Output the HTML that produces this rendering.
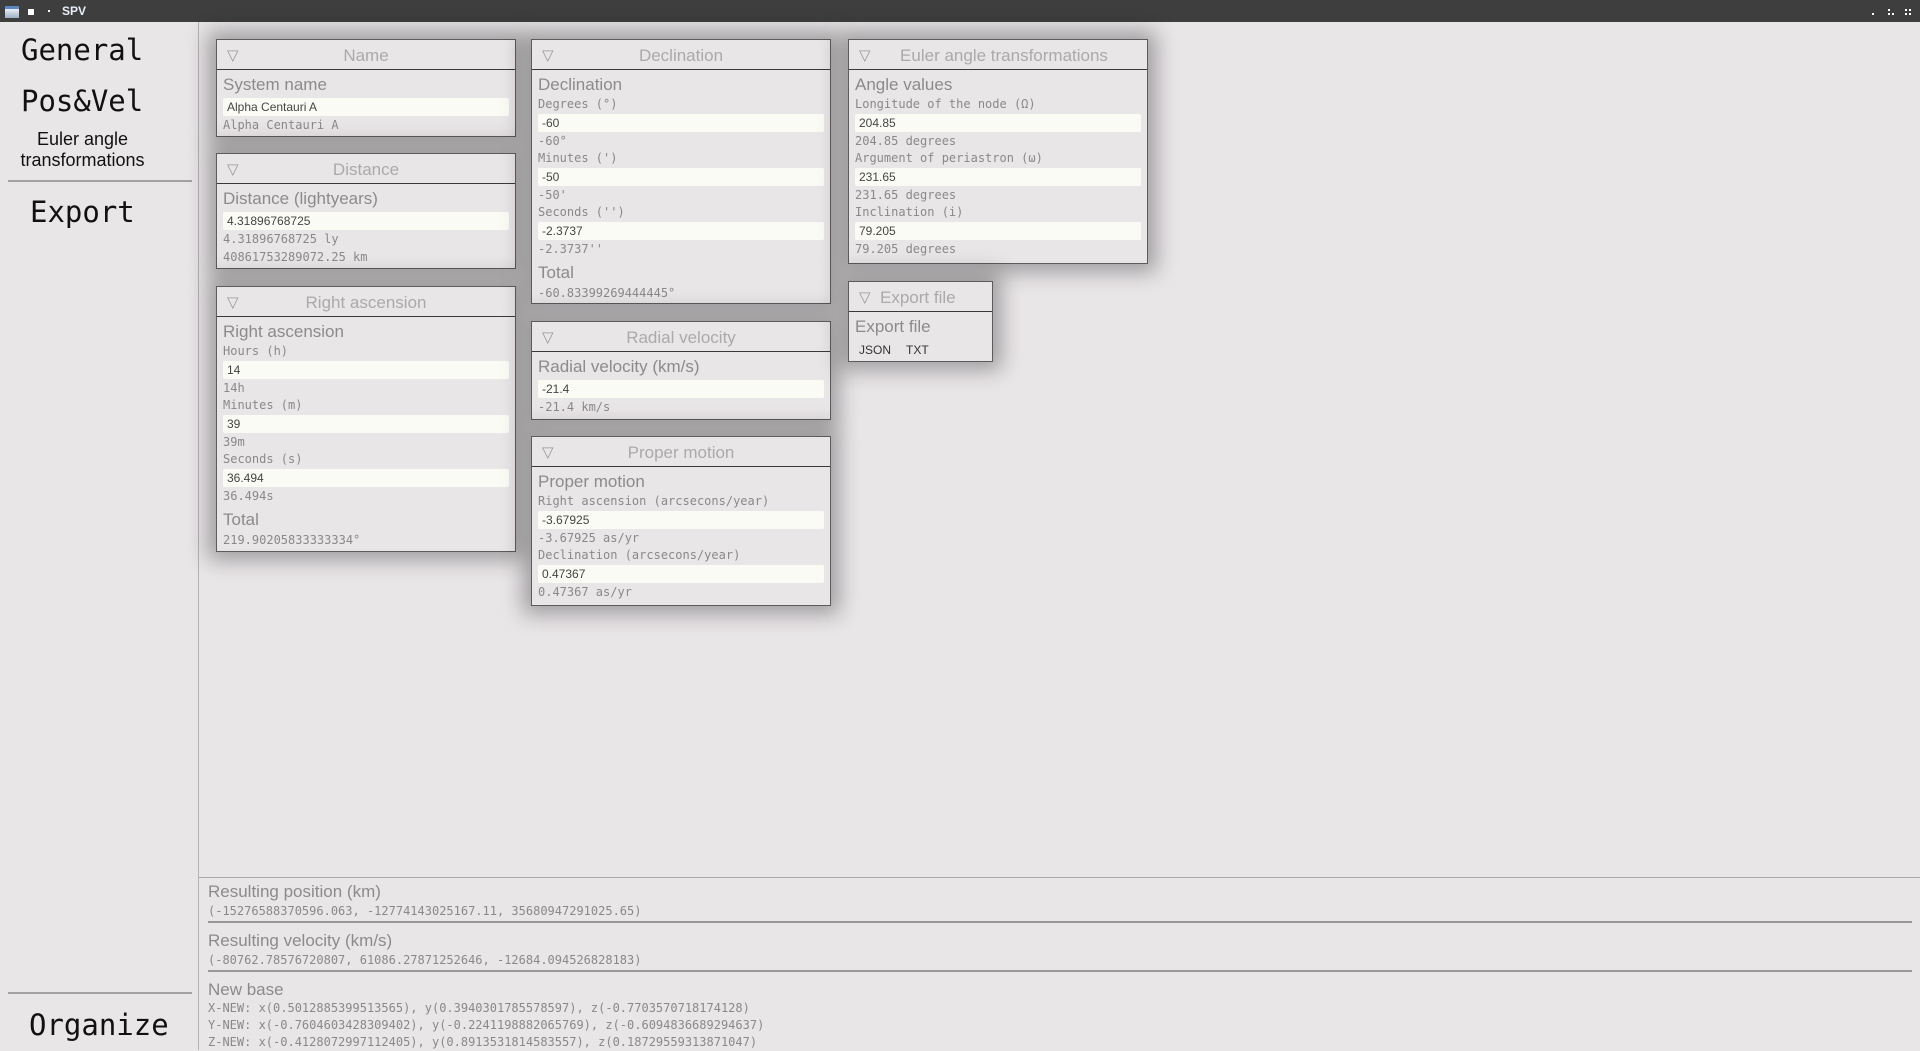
<!DOCTYPE html>
<html><head><meta charset="utf-8">
<style>
*{box-sizing:border-box;margin:0;padding:0}
html,body{width:1920px;height:1050px;overflow:hidden;background:#e9e6e8;font-family:"Liberation Sans","DejaVu Sans",sans-serif}
#tb{position:absolute;left:0;top:0;width:1920px;height:22px;background:#3e3e3e}
#side{position:absolute;left:0;top:22px;width:199px;height:1028px;border-right:1px solid #b5b3b4;background:#e9e6e8}
.big{position:absolute;font-size:29px;color:#111;font-family:"DejaVu Sans Mono","Liberation Mono",monospace;line-height:34px}
.hr{position:absolute;height:2px;background:#a3a1a2}
.panel{position:absolute;width:300px;border:1px solid #5d5b5c;background:#e9e6e8;box-shadow:0 0 20px 8px rgba(0,0,0,0.32)}
.hd{height:30px;border-bottom:1.5px solid #3a3a3a;position:relative;color:#aaa;font-size:17px;line-height:31px;text-align:center}
.hd .tri{position:absolute;left:10px;top:0;font-size:15px;color:#999}
.bd{padding:0 6px}
.t{font-size:17px;color:#8c8a8b;line-height:26px;height:26px;position:relative;top:2px}
.l{font-family:"DejaVu Sans Mono","Liberation Mono",monospace;font-size:12px;color:#8a8889;line-height:16px;height:16px;white-space:nowrap}
.v{font-family:"DejaVu Sans Mono","Liberation Mono",monospace;font-size:12px;color:#8a8889;line-height:18px;height:18px;white-space:nowrap}
.i{margin-top:2px;height:18px;background:#fbfbf6;font-size:12px;color:#444;line-height:18px;padding-left:4px;border-radius:2px}
#bot{position:absolute;left:199px;top:877px;width:1721px;height:173px;border-top:1px solid #aaa}
#bot .t{position:absolute;left:9px;height:auto}
#bot .v{position:absolute;left:9px}
#bot .sep{position:absolute;left:9px;right:8px;height:2px;background:#9a9899}
</style></head><body>
<div id="tb">
<div style="position:absolute;left:5px;top:6px;width:14px;height:12px;background:linear-gradient(#e8eef5,#9eb0c4);border-top:3px solid #5b86c0"></div>
<div style="position:absolute;left:28px;top:9px;width:6px;height:6px;background:#fff"></div>
<div style="position:absolute;left:48px;top:10px;width:2px;height:2px;background:#fff"></div>
<div style="position:absolute;left:62px;top:4px;font-size:12px;color:#e8eef8;font-weight:bold;line-height:14px">SPV</div>
<div style="position:absolute;left:1872px;top:13px;width:2px;height:2px;background:#fff"></div>
<div style="position:absolute;left:1888px;top:9px;width:2px;height:2px;background:#fff;box-shadow:0 4px 0 #fff,4px 4px 0 #fff"></div>
<div style="position:absolute;left:1905px;top:9px;width:2px;height:2px;background:#fff;box-shadow:0 4px 0 #fff,4px 4px 0 #fff,4px 0 0 #fff"></div>
</div>

<div id="side">
<div class="big" style="left:21px;top:11px">General</div>
<div class="big" style="left:21px;top:62px">Pos&amp;Vel</div>
<div style="position:absolute;left:0;width:165px;top:107px;text-align:center;font-size:18px;line-height:21px;color:#111">Euler angle<br>transformations</div>
<div class="hr" style="left:8px;width:184px;top:158px"></div>
<div class="big" style="left:30px;top:173px">Export</div>
<div class="hr" style="left:8px;width:184px;top:970px"></div>
<div class="big" style="left:29px;top:986px">Organize</div>
</div>

<div class="panel" style="left:216px;top:39px;height:98px">
<div class="hd"><span class="tri">▽</span>Name</div>
<div class="bd"><div class="t">System name</div><div class="i">Alpha Centauri A</div><div class="v">Alpha Centauri A</div></div>
</div>
<div class="panel" style="left:216px;top:153px;height:116px">
<div class="hd"><span class="tri">▽</span>Distance</div>
<div class="bd"><div class="t">Distance (lightyears)</div><div class="i">4.31896768725</div><div class="v">4.31896768725 ly</div><div class="v">40861753289072.25 km</div></div>
</div>
<div class="panel" style="left:216px;top:286px;height:266px">
<div class="hd"><span class="tri">▽</span>Right ascension</div>
<div class="bd"><div class="t">Right ascension</div>
<div class="l">Hours (h)</div><div class="i">14</div><div class="v">14h</div>
<div class="l">Minutes (m)</div><div class="i">39</div><div class="v">39m</div>
<div class="l">Seconds (s)</div><div class="i">36.494</div><div class="v">36.494s</div>
<div class="t">Total</div><div class="v">219.90205833333334°</div></div>
</div>

<div class="panel" style="left:531px;top:39px;height:265px">
<div class="hd"><span class="tri">▽</span>Declination</div>
<div class="bd"><div class="t">Declination</div>
<div class="l">Degrees (°)</div><div class="i">-60</div><div class="v">-60°</div>
<div class="l">Minutes (')</div><div class="i">-50</div><div class="v">-50'</div>
<div class="l">Seconds ('')</div><div class="i">-2.3737</div><div class="v">-2.3737''</div>
<div class="t">Total</div><div class="v">-60.83399269444445°</div></div>
</div>
<div class="panel" style="left:531px;top:321px;height:99px">
<div class="hd"><span class="tri">▽</span>Radial velocity</div>
<div class="bd"><div class="t">Radial velocity (km/s)</div><div class="i">-21.4</div><div class="v">-21.4 km/s</div></div>
</div>
<div class="panel" style="left:531px;top:436px;height:170px">
<div class="hd"><span class="tri">▽</span>Proper motion</div>
<div class="bd"><div class="t">Proper motion</div>
<div class="l">Right ascension (arcsecons/year)</div><div class="i">-3.67925</div><div class="v">-3.67925 as/yr</div>
<div class="l">Declination (arcsecons/year)</div><div class="i">0.47367</div><div class="v">0.47367 as/yr</div></div>
</div>

<div class="panel" style="left:848px;top:39px;height:225px">
<div class="hd"><span class="tri">▽</span><span style="padding-left:12px">Euler angle transformations</span></div>
<div class="bd"><div class="t">Angle values</div>
<div class="l">Longitude of the node (Ω)</div><div class="i">204.85</div><div class="v">204.85 degrees</div>
<div class="l">Argument of periastron (ω)</div><div class="i">231.65</div><div class="v">231.65 degrees</div>
<div class="l">Inclination (i)</div><div class="i">79.205</div><div class="v">79.205 degrees</div></div>
</div>
<div class="panel" style="left:848px;top:281px;height:81px;width:145px">
<div class="hd" style="text-align:left;padding-left:31px"><span class="tri">▽</span>Export file</div>
<div class="bd"><div class="t">Export file</div>
<div style="font-size:12px;color:#333;line-height:20px;padding-left:4px;margin-top:2px">JSON<span style="display:inline-block;width:15px"></span>TXT</div></div>
</div>

<div id="bot">
<div class="t" style="top:1px">Resulting position (km)</div>
<div class="v" style="top:24px">(-15276588370596.063, -12774143025167.11, 35680947291025.65)</div>
<div class="sep" style="top:43px"></div>
<div class="t" style="top:50px">Resulting velocity (km/s)</div>
<div class="v" style="top:73px">(-80762.78576720807, 61086.27871252646, -12684.094526828183)</div>
<div class="sep" style="top:92px"></div>
<div class="t" style="top:99px">New base</div>
<div class="v" style="top:121px">X-NEW: x(0.5012885399513565), y(0.3940301785578597), z(-0.7703570718174128)</div>
<div class="v" style="top:138px">Y-NEW: x(-0.7604603428309402), y(-0.2241198882065769), z(-0.6094836689294637)</div>
<div class="v" style="top:155px">Z-NEW: x(-0.4128072997112405), y(0.8913531814583557), z(0.18729559313871047)</div>
</div>
</body></html>
